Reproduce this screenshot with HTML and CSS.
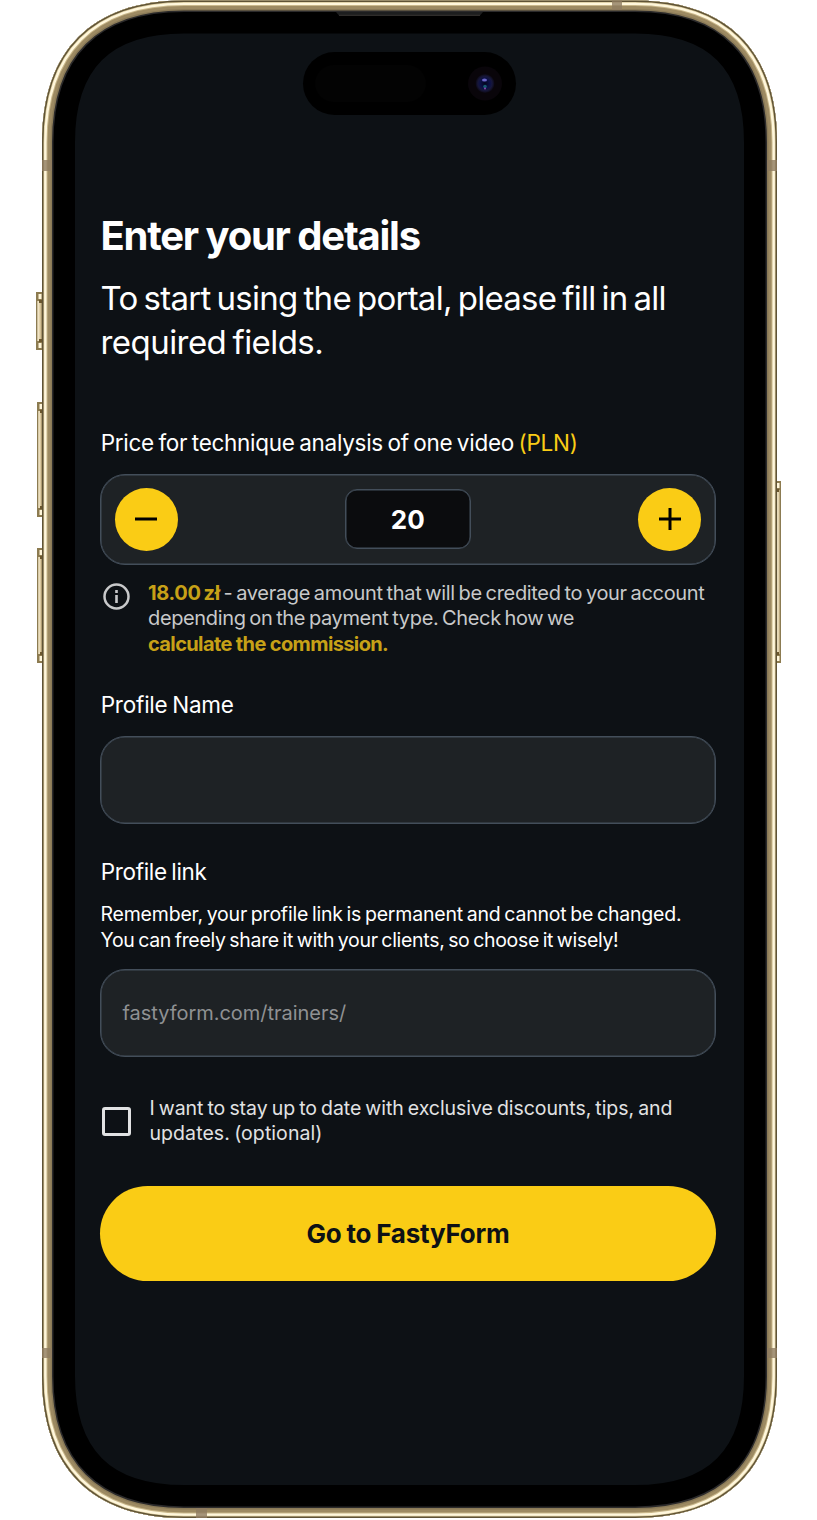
FILE: index.html
```html
<!DOCTYPE html>
<html lang="en">
<head>
<meta charset="utf-8">
<title>FastyForm</title>
<link rel="stylesheet" href="styles.css">
</head>
<body>
<div class="phone">
  <svg class="device" width="817" height="1520" viewBox="0 0 817 1520" aria-hidden="true">
    <defs>
      <path id="shell" d="M42 142.500C42 50.500 92 .5 184 .5H635C727 .5 777 50.500 777 142.500V1376C777 1468 727 1518 635 1518H184C92 1518 42 1468 42 1376Z"/>
      <clipPath id="shell-clip"><use href="#shell"/></clipPath>
      <linearGradient id="key" x2="1" y2="0"><stop stop-color="#a3936b"/><stop offset=".3" stop-color="#f3e7c8"/><stop offset=".65" stop-color="#d8c59a"/><stop offset="1" stop-color="#7c6a40"/></linearGradient>
      <radialGradient id="lens"><stop stop-color="#03061f"/><stop offset=".5" stop-color="#0b1048"/><stop offset=".75" stop-color="#17173a"/><stop offset="1" stop-color="#0b0812"/></radialGradient>
      <g id="cap"><rect width="5" height="9" fill="#8d7b4f"/><rect x="1.500" y="2" width="3" height="5" fill="#fff6da"/><rect x="2" y="8" width="3" height="3" fill="#6b572d"/></g>
    </defs>
    <g fill="url(#key)" stroke="#8b7b52">
      <rect x="36.5" y="292.5" width="6" height="57"/>
      <rect x="37.5" y="402.5" width="5" height="114"/>
      <rect x="37.5" y="548.5" width="5" height="114"/>
      <rect x="776.5" y="481.5" width="4" height="181"/>
    </g>
    <use href="#cap" x="37" y="292"/><use href="#cap" transform="translate(37 350) scale(1 -1)"/>
    <use href="#cap" x="38" y="402"/><use href="#cap" transform="translate(38 517) scale(1 -1)"/>
    <use href="#cap" x="38" y="548"/><use href="#cap" transform="translate(38 663) scale(1 -1)"/>
    <use href="#cap" transform="translate(781 481) scale(-1 1)"/><use href="#cap" transform="translate(781 663) scale(-1 -1)"/>
    <g clip-path="url(#shell-clip)">
      <use href="#shell" fill="#0d1115" stroke="#000" stroke-width="66"/>
      <g fill="none">
        <use href="#shell" stroke="#2b2a2b" stroke-width="23"/>
        <use href="#shell" stroke="#8b7b58" stroke-width="20"/>
        <use href="#shell" stroke="#9d8a62" stroke-width="17"/>
        <use href="#shell" stroke="#c9b78a" stroke-width="11"/>
        <use href="#shell" stroke="#fff7dc" stroke-width="9"/>
        <use href="#shell" stroke="#d9c99b" stroke-width="4.4"/>
        <use href="#shell" stroke="#5f5336" stroke-width="3"/>
      </g>
      <g fill="#8f7c62" fill-opacity=".8">
        <rect x="42" y="160" width="10" height="11"/><rect x="767" y="160" width="10" height="11"/>
        <rect x="42" y="1348" width="10" height="10"/><rect x="767" y="1348" width="10" height="10"/>
        <rect x="612" y="0" width="10" height="10"/><rect x="196" y="1508" width="11" height="10"/>
      </g>
    </g>
    <path d="M336 12H483L480 15.5H339Z" fill="#1d1e1f"/><path d="M339 15.3H480" stroke="#393532"/>
    <rect x="303" y="52" width="213" height="63" rx="31.5"/>
    <rect x="315" y="65" width="111" height="37" rx="18.5" fill="#030303"/>
    <circle cx="485" cy="83.500" r="17" fill="#09050a"/>
    <circle cx="485" cy="83.500" r="9.500" fill="url(#lens)"/>
    <ellipse cx="484.500" cy="80" rx="2.500" ry="1.500" fill="#6a66c8"/>
    <circle cx="485" cy="86.500" r="1.800" fill="#145a70"/><circle cx="485" cy="88.500" r="1" fill="#8a45ad"/>
  </svg>
  <main class="form">
    <h1 class="title">Enter your details</h1>
    <p class="lead"><span class="lead-first">To start using the portal, please fill in all</span><br>required fields.</p>
    <label class="label label-price">Price for technique analysis of one video <span class="accent">(PLN)</span></label>
    <div class="stepper">
      <button class="round"><svg width="24" height="24" viewBox="0 0 24 24"><path d="M1 12H23" stroke="#000" stroke-width="3"/></svg></button>
      <div class="amount">20</div>
      <button class="round"><svg width="24" height="24" viewBox="0 0 24 24"><path d="M1 12H23M12 1V23" stroke="#000" stroke-width="3"/></svg></button>
    </div>
    <div class="note">
      <svg class="info" width="27" height="27" viewBox="0 0 27 27"><circle cx="13.500" cy="13.500" r="12" fill="none" stroke="#c8c9ca" stroke-width="2.500"/><path d="M13.500 12V20M13.500 7V10" stroke="#c8c9ca" stroke-width="2.600"/></svg>
      <p class="note-text"><b>18.00 zł</b> - average amount that will be credited to your account<br><span class="note-second">depending on the payment type. Check how we</span><br><b class="note-link">calculate the commission.</b></p>
    </div>
    <label class="label label-name">Profile Name</label>
    <div class="input"></div>
    <label class="label label-link">Profile link</label>
    <p class="hint">Remember, your profile link is permanent and cannot be changed.<br><span class="hint-second">You can freely share it with your clients, so choose it wisely!</span></p>
    <div class="input">fastyform.com/trainers/</div>
    <div class="consent">
      <span class="box"></span>
      <p class="consent-text">I want to stay up to date with exclusive discounts, tips, and<br><span class="consent-second">updates. (optional)</span></p>
    </div>
    <button class="submit">Go to FastyForm</button>
  </main>
</div>
</body>
</html>
```
FILE: styles.css
```css
* { box-sizing: border-box; }
body { margin: 0; background: #fff; font-family: Inter, "Open Sans", sans-serif; color: #fff; }
h1, p { margin: 0; }
button { border: 0; padding: 0; font: inherit; }
.phone { position: relative; width: 817px; height: 1520px; overflow: hidden; }
.device { position: absolute; inset: 0; }
.form { position: relative; display: flex; flex-direction: column; padding: 211px 101px 0 100px; }
.title { padding-left: 0.5px; font-size: 40px; line-height: 50px; font-weight: 700; white-space: nowrap; letter-spacing: -1.25px; word-spacing: -0.5px; }
.lead { margin-top: 15px; padding-left: 0.5px; font-size: 33px; line-height: 44px; white-space: nowrap; letter-spacing: -0.55px; word-spacing: -2.5px; }
.lead-first { letter-spacing: -0.74px; }
.label { padding-left: 0.7px; font-size: 22.5px; line-height: 28px; white-space: nowrap; word-spacing: -1.5px; }
.accent { color: #facc15; }
.label-price { margin-top: 65px; letter-spacing: -0.28px; }
.stepper { display: flex; align-items: center; justify-content: space-between; width: 616px; height: 91px; margin-top: 17px; padding: 0 14px 1px 13.5px; border: 1px solid #434e5a; border-radius: 25px; background: #1e2225; box-shadow: inset 0 0 0 0.5px #434e5a; }
.round { display: grid; place-items: center; width: 63px; height: 63px; border-radius: 50%; background: #facc15; }
.amount { display: grid; place-items: center; width: 126px; height: 60px; border: 1px solid #434e5a; border-radius: 12px; background: #0b0c0e; box-shadow: inset 0 0 0 0.5px #434e5a; font-size: 26px; font-weight: 700; }
.note { display: flex; gap: 18px; margin-top: 16px; padding-left: 3px; color: #c8c9ca; }
.info { margin-top: 2px; flex: none; }
.note-text { font-size: 20px; line-height: 25.4px; white-space: nowrap; letter-spacing: -0.33px; word-spacing: -1.5px; }
.note-text b { color: #c7a117; font-weight: 700; }
.note-text .note-second { letter-spacing: -0.36px; }
.note-text .note-link { letter-spacing: -0.62px; word-spacing: 0; }
.label-name { margin-top: 34px; letter-spacing: -0.21px; }
.input { display: flex; align-items: center; width: 616px; height: 88px; margin-top: 17px; padding-left: 21.5px; border: 1px solid #434e5a; border-radius: 25px; background: #1e2225; box-shadow: inset 0 0 0 0.5px #434e5a; color: #8f9193; font-size: 20px; letter-spacing: -0.03px; }
.label-link { margin-top: 34px; letter-spacing: -0.31px; }
.hint { margin-top: 16px; padding-left: 0.5px; font-size: 19.5px; line-height: 25.4px; white-space: nowrap; letter-spacing: -0.2px; word-spacing: -1.5px; }
.hint-second { letter-spacing: -0.31px; }
.hint + .input { margin-top: 16px; }
.consent { display: flex; align-items: center; gap: 18px; margin-top: 39px; padding-left: 2px; color: #e1e2e3; }
.box { width: 29px; height: 29px; border: 3px solid #e1e2e3; border-radius: 3px; }
.consent-text { padding-left: 0.5px; font-size: 19.5px; line-height: 25.4px; white-space: nowrap; letter-spacing: -0.06px; word-spacing: -1.3px; }
.consent-second { letter-spacing: 0.07px; }
.submit { width: 616px; height: 95px; margin-top: 39px; border-radius: 48px; background: #facc15; color: #0d1115; font-size: 26px; font-weight: 700; white-space: nowrap; letter-spacing: -0.2px; word-spacing: -1px; }
```
